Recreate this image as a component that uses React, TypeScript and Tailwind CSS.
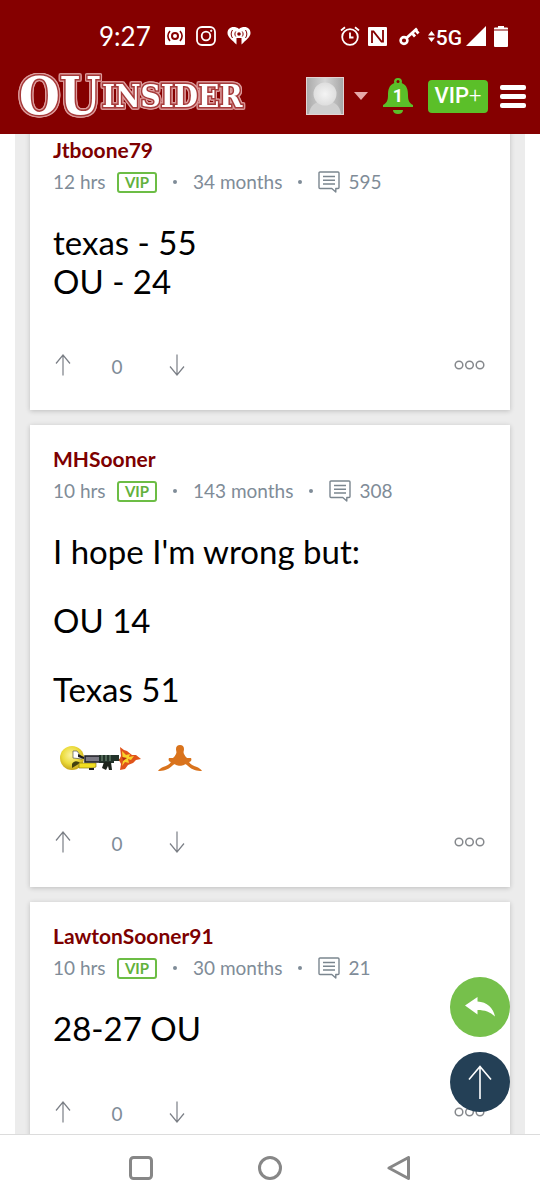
import type { ReactNode } from "react";

type Post = {
  user: string;
  age: string;
  member: string;
  posts: string;
  votes: number;
  body: ReactNode;
};

const GunSmiley = () => (
  <svg width="82" height="28" viewBox="0 0 82 28" role="img" aria-label="Smiley with a gun">
    <defs>
      <radialGradient id="face" cx="45%" cy="38%" r="60%">
        <stop offset="0" stopColor="#fbf3a0" />
        <stop offset="0.6" stopColor="#ecdc3c" />
        <stop offset="1" stopColor="#c9a91c" />
      </radialGradient>
    </defs>
    <circle cx="12" cy="13" r="12" fill="url(#face)" />
    <path d="M13 6h4l3 4 2 3v1l-9-1z" fill="#fff" stroke="#555" strokeWidth="0.7" />
    <path d="M12 19c2-4 6-3 8-1l-3 2-5 3z" fill="#444210" />
    <path d="M18 9l6 3v2l-6-2z" fill="#1b1b1b" />
    <path d="M19 18h17v4l-4 1H19z" fill="#f0dd22" stroke="#8d7c12" strokeWidth="0.7" />
    <path d="M29 23h5v2h-5z" fill="#222" />
    <path d="M25 11h15v6H25z" fill="#7b7a84" stroke="#1d1d22" strokeWidth="1.500" />
    <path d="M39 10h15v8H39z" fill="#22332a" />
    <path d="M42 10v6M46 10v6M50 10v6" stroke="#7d9a80" strokeWidth="1" />
    <path d="M44 17l-2 6 4 2 2-4 1 4h3l-1-8z" fill="#1c241c" />
    <path d="M54 10h5v6h-5zM54 14h10v2H54z" fill="#22332a" />
    <path d="M60 2l4 3 3 1 5 4 4 0 5 4-5 1-3 3-5 2-3 4-5 1 1-6-2-4 2-4z" fill="#e0541a" />
    <path d="M62 6l4 4 4-1-1 3 5-1-3 4-3-1 1 4-4-1-3 4 1-5z" fill="#f9d32b" />
    <path d="M62 12l5 1-4 3z" fill="#b62a10" />
  </svg>
);

const Longhorn = () => (
  <svg width="44" height="28" viewBox="0 0 44 28" role="img" aria-label="Upside down longhorn">
    <path
      d="M22 0c2.500 0 4 1.500 4 4 0 2-1 3 0 5 1 2 2 3 3 4h4c1 2 0 4-2 4 2 3 5 4 8 5 2 1 4 2 5 4-5 0-10-1-14-5-2-2-3-2-4-1-2 1-6 1-8 0-1-1-2-1-4 1-4 4-9 5-14 5 1-2 3-3 5-4 3-1 6-2 8-5-2 0-3-2-2-4h4c1-1 2-2 3-4 1-2 0-3 0-5 0-2.500 1.500-4 4-4z"
      fill="#d9731c"
    />
  </svg>
);

const posts: Post[] = [
  {
    user: "Jtboone79",
    age: "12 hrs",
    member: "34 months",
    posts: "595",
    votes: 0,
    body: (
      <p>
        texas - 55
        <br />
        OU - 24
      </p>
    ),
  },
  {
    user: "MHSooner",
    age: "10 hrs",
    member: "143 months",
    posts: "308",
    votes: 0,
    body: (
      <>
        <p>I hope I'm wrong but:</p>
        <p>OU 14</p>
        <p>Texas 51</p>
        <div className="flex h-[39px] items-center gap-4 pl-[7px]">
          <GunSmiley />
          <Longhorn />
        </div>
      </>
    ),
  },
  {
    user: "LawtonSooner91",
    age: "10 hrs",
    member: "30 months",
    posts: "21",
    votes: 0,
    body: <p>28-27 OU</p>,
  },
];

const StatusBar = () => (
  <div className="flex h-[68px] items-center justify-between pt-1 pr-8 pl-[99px] text-white">
    <div className="flex items-center gap-[11px]">
      <span className="mr-[3px] font-['Lato'] text-[26px] leading-8">9:27</span>
      <svg width="20" height="18" viewBox="0 0 20 18" aria-hidden="true">
        <rect width="20" height="18" rx="1" fill="#fff" />
        <circle cx="10" cy="9" r="3" fill="none" stroke="#850000" strokeWidth="2" />
        <path d="M5 4c-2.500 3-2.500 7 0 10M15 4c2.500 3 2.500 7 0 10" fill="none" stroke="#850000" strokeWidth="1.600" />
      </svg>
      <svg width="20" height="20" viewBox="0 0 20 20" fill="none" stroke="#fff" strokeWidth="1.800" aria-hidden="true">
        <rect x="1" y="1" width="18" height="18" rx="5" />
        <circle cx="10" cy="10" r="4.300" />
        <circle cx="15.200" cy="4.800" r="0.700" fill="#fff" strokeWidth="1" />
      </svg>
      <svg width="24" height="18" viewBox="0 0 24 18" aria-hidden="true">
        <path d="M12 2C10.500 .5 8.500 0 6.500 0 3 0 .5 2.500 .5 6c0 4 4.500 7 9 11.500V11h5v6.500C19 13 23.500 10 23.500 6c0-3.500-2.500-6-6-6-2 0-4 .5-5.500 2z" fill="#fff" />
        <circle cx="12" cy="7" r="1.800" fill="#850000" />
        <path d="M8.800 4.500c-1.200 1.500-1.200 3.500 0 5M15.200 4.500c1.200 1.500 1.200 3.500 0 5M5.500 3c-1.800 2.500-1.800 5.500 0 8M18.500 3c1.800 2.500 1.800 5.500 0 8" fill="none" stroke="#850000" strokeWidth="1" />
      </svg>
    </div>
    <div className="flex items-center">
      <svg className="mr-2" width="20" height="20" viewBox="0 0 20 20" fill="none" stroke="#fff" strokeWidth="1.800" aria-hidden="true">
        <circle cx="10" cy="11" r="7.800" />
        <path d="M10 6.500V11.500h3.500M1 4.500l4-3.200M19 4.500l-4-3.200" />
      </svg>
      <svg className="mr-3" width="19" height="19" viewBox="0 0 19 19" aria-hidden="true">
        <rect width="19" height="19" rx="1" fill="#fff" />
        <path d="M4 16V4.500h1.500L13 14M15 3v11.500h-1.500L6 5" fill="none" stroke="#850000" strokeWidth="1.800" />
      </svg>
      <svg className="mr-2" width="21" height="19" viewBox="0 0 21 19" fill="none" stroke="#fff" aria-hidden="true">
        <circle cx="5" cy="13.500" r="3.400" strokeWidth="2.600" />
        <path d="M7.500 11L18 1.500M13 6l3 3.500M16.500 3l3 3.500" strokeWidth="2.800" />
      </svg>
      <svg width="7" height="11" viewBox="0 0 7 11" fill="#fff" aria-hidden="true">
        <path d="M0 4.500L3.500 0 7 4.500zM0 6.500h7L3.500 11z" />
      </svg>
      <span className="mt-1 ml-px font-['Roboto'] text-[21px] leading-6 font-medium">5G</span>
      <svg className="mr-2 ml-1" width="20" height="20" viewBox="0 0 20 20" fill="#fff" aria-hidden="true">
        <path d="M20 0v20H0z" />
      </svg>
      <svg width="14" height="21" viewBox="0 0 14 21" fill="#fff" aria-hidden="true">
        <path d="M4 0h6v1.500h3a1 1 0 0 1 1 1v1H0v-1a1 1 0 0 1 1-1h3zM0 4.500h14v15.500a1 1 0 0 1-1 1H1a1 1 0 0 1-1-1z" />
      </svg>
    </div>
  </div>
);

const Logo = () => (
  <a href="#" aria-label="OU Insider">
    <svg
      className="overflow-visible [filter:drop-shadow(1px_0_#dd9d9d)_drop-shadow(-1px_0_#dd9d9d)_drop-shadow(0_1px_#dd9d9d)_drop-shadow(0_-1px_#dd9d9d)]"
      width="234"
      height="54"
      viewBox="0 0 234 54"
    >
      <g
        fontFamily="'DejaVu Serif Condensed', 'DejaVu Serif', serif"
        fontWeight="bold"
        fill="#fff"
        stroke="#a63a3a"
        strokeWidth="3"
        strokeLinejoin="miter"
        paintOrder="stroke"
      >
        <text x="2" y="42" fontSize="52">OU</text>
        <text x="85" y="35" fontSize="31">INSIDER</text>
      </g>
    </svg>
  </a>
);

const SiteHeader = () => (
  <div className="flex h-[66px] items-center justify-between pr-[14px] pb-1 pl-[17px]">
    <Logo />
    <div className="flex items-center pb-[6px]">
      <button aria-label="Account" className="mr-[14px] flex items-center gap-[10px]">
        <svg width="38" height="38" viewBox="0 0 38 38">
          <defs>
            <linearGradient id="avatarBg" x2="1">
              <stop offset="0" stopColor="#aaa" />
              <stop offset="0.5" stopColor="#d5d5d5" />
              <stop offset="1" stopColor="#a6a6a6" />
            </linearGradient>
            <radialGradient id="avatarHead">
              <stop offset="0" stopColor="#f4f4f4" />
              <stop offset="1" stopColor="#dedede" />
            </radialGradient>
          </defs>
          <rect x="0.500" y="0.500" width="37" height="37" fill="url(#avatarBg)" stroke="#e3d3d3" />
          <path d="M3 37c1-8 6-13 16-13s15 5 16 13z" fill="#cfcfcf" />
          <circle cx="19" cy="17" r="11.500" fill="url(#avatarHead)" />
        </svg>
        <svg width="14" height="8" viewBox="0 0 14 8">
          <path d="M0 0h14L7 8z" fill="#e6a9a9" />
        </svg>
      </button>
      <button aria-label="Notifications" className="relative mr-[14px] font-['Roboto'] text-lg font-bold text-white">
        <svg width="32" height="36" viewBox="0 0 32 36" fill="#5bbf29">
          <path d="M16 0a4 4 0 0 1 4 4l-.3 1C25 7 26 12 26 17c0 5 1 8 5 10v2H1v-2c4-2 5-5 5-10 0-5 1-10 6.300-12L12 4a4 4 0 0 1 4-4z" />
          <circle cx="16" cy="3.500" r="1.500" fill="#850000" />
          <path d="M11 32h10c0 2.500-2 4-5 4s-5-1.500-5-4z" />
        </svg>
        <span className="absolute inset-0 flex items-center justify-center">1</span>
      </button>
      <button className="mr-3 flex h-[33px] w-[60px] items-center justify-center rounded bg-[#5bbf29] font-['Roboto'] text-[22px] leading-6 font-medium text-white">
        VIP<span className="font-light">+</span>
      </button>
      <button aria-label="Menu" className="flex flex-col gap-1">
        <span className="h-[5px] w-[26px] rounded-xs bg-white" />
        <span className="h-[5px] w-[26px] rounded-xs bg-white" />
        <span className="h-[5px] w-[26px] rounded-xs bg-white" />
      </button>
    </div>
  </div>
);

const VoteArrow = ({ down = false }: { down?: boolean }) => (
  <svg className={down ? "rotate-180" : ""} width="16" height="22" viewBox="0 0 16 22" fill="none" stroke="#7b7f86" strokeWidth="1.200">
    <path d="M8 21.500V1M1 9.500L8 1l7 8.500" />
  </svg>
);

const PostCard = ({ post }: { post: Post }) => (
  <article className="bg-white px-[23px] pt-[18px] pb-[29px] shadow-[0_1px_5px_rgba(0,0,0,0.2)]">
    <h2 className="text-[21px] leading-8 font-bold text-[#7d0000]">
      <a href="#">{post.user}</a>
    </h2>
    <div className="flex h-8 items-center text-[19px] leading-8 text-[#7f8c98]">
      <span className="w-16">{post.age}</span>
      <span className="flex h-[21px] w-10 items-center justify-center rounded-[3px] border-2 border-[#6cbd45] text-[15px] font-bold text-[#62b13c]">
        VIP
      </span>
      <span className="flex w-9 justify-center">
        <span className="size-1 rounded-full bg-[#7f8c98]" />
      </span>
      <span>{post.member}</span>
      <span className="flex w-9 justify-center">
        <span className="size-1 rounded-full bg-[#7f8c98]" />
      </span>
      <svg className="mr-2" width="22" height="22" viewBox="0 0 22 22" fill="none" stroke="#7b868f" strokeWidth="1.400" strokeLinejoin="round" aria-hidden="true">
        <path d="M2 1h18a1 1 0 0 1 1 1v14.500a1 1 0 0 1-1 1h-2.200v3.500l-4-3.500H2a1 1 0 0 1-1-1V2a1 1 0 0 1 1-1zM5 5.500h12M5 9.200h12M5 13h12" />
      </svg>
      <span>{post.posts}</span>
    </div>
    <div className="mt-[25px] mb-12 space-y-[30px] text-[33px] leading-[39px] text-black">{post.body}</div>
    <div className="flex h-8 items-center text-[19px] text-[#7f8c98]">
      <button aria-label="Upvote" className="flex w-5 justify-center">
        <VoteArrow />
      </button>
      <span className="w-22 pt-1 text-center">{post.votes}</span>
      <button aria-label="Downvote" className="flex w-8 justify-center">
        <VoteArrow down />
      </button>
      <button aria-label="More" className="ml-auto">
        <svg width="34" height="10" viewBox="0 0 34 10" fill="none" stroke="#85888c" strokeWidth="1.500">
          <circle cx="6" cy="5" r="3.800" />
          <circle cx="16.500" cy="5" r="3.800" />
          <circle cx="27" cy="5" r="3.800" />
        </svg>
      </button>
    </div>
  </article>
);

const NavBar = () => (
  <nav className="flex h-[66px] shrink-0 items-center justify-center gap-[105px] border-t border-[#dcdcdc] bg-white">
    <button aria-label="Recent apps">
      <svg width="24" height="24" viewBox="0 0 24 24" fill="none" stroke="#878787" strokeWidth="3">
        <rect x="1.500" y="1.500" width="21" height="21" rx="3" />
      </svg>
    </button>
    <button aria-label="Home">
      <svg width="24" height="24" viewBox="0 0 24 24" fill="none" stroke="#878787" strokeWidth="3">
        <circle cx="12" cy="12" r="10.500" />
      </svg>
    </button>
    <button aria-label="Back">
      <svg width="24" height="24" viewBox="0 0 24 24" fill="none" stroke="#878787" strokeWidth="3" strokeLinejoin="round">
        <path d="M21.500 1.500v21L2 12z" />
      </svg>
    </button>
  </nav>
);

const App = () => {
  return (
    <div className="flex h-screen flex-col overflow-hidden bg-white font-['Lato',sans-serif]">
      <header className="relative z-10 shrink-0 bg-[#850000]">
        <StatusBar />
        <SiteHeader />
      </header>

      <main className="relative min-h-0 flex-1 overflow-hidden">
        <div className="mx-[15px] -mt-[18px] flex flex-col gap-[15px] bg-[#ececec] px-[15px]">
          {posts.map((post) => (
            <PostCard key={post.user} post={post} />
          ))}
        </div>

        <div className="absolute right-[30px] bottom-[22px] flex flex-col gap-[15px]">
          <button aria-label="Reply" className="flex size-15 items-center justify-center rounded-full bg-[#76c04b]">
            <svg width="30" height="20" viewBox="0 0 30 20" fill="#fff">
              <path d="M0 8.500L12.500 0v4.500C22 5 28.500 11 30 19.500 25 15 20 13 12.500 13v4.500z" />
            </svg>
          </button>
          <button aria-label="Back to top" className="flex size-15 items-center justify-center rounded-full bg-[#244056]">
            <svg width="24" height="34" viewBox="0 0 24 34" fill="none" stroke="#fff" strokeWidth="1.600">
              <path d="M12 34V2M1 14.500L12 1.500l11 13" />
            </svg>
          </button>
        </div>
      </main>

      <NavBar />
    </div>
  );
};

export default App;
